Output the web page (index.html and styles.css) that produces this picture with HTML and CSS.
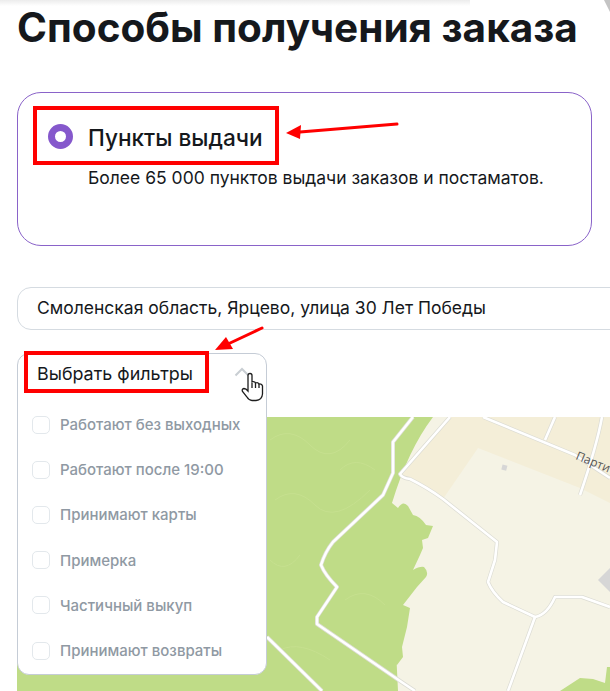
FILE: index.html
```html
<!DOCTYPE html>
<html lang="ru">
<head>
    <meta charset="UTF-8">
    <meta name="viewport" content="width=device-width, initial-scale=1.0">
    <title>Способы получения заказа</title>
    <link rel="stylesheet" href="styles.css">
</head>
<body>
    <div class="top-shade"></div>
    <div class="page">
        <h1 class="title">Способы получения заказа</h1>

        <div class="delivery-card">
            <div class="delivery-head">
                <span class="radio"></span>
                <span class="delivery-name">Пункты выдачи</span>
            </div>
            <p class="delivery-text">Более 65 000 пунктов выдачи заказов и постаматов.</p>
        </div>

        <div class="address">Смоленская область, Ярцево, улица 30 Лет Победы</div>

        <div class="map-area">
            <svg class="map" viewBox="17 417 593 274" preserveAspectRatio="none">
                <rect class="land" x="17" y="417" width="593" height="274"/>
                <polygon class="land-dark" points="450,417 610,417 610,503 580,488 478,448 443,499 402,475"/>
                <path class="forest" d="M17 417 H433 Q408 450 392 503 L398 508 Q403 500 408 506 L413 515 Q420 516 426 525 L433 526 L428 538 L422 540 L423 548 L420 555 L413 570 Q420 566 424 567 Q429 572 426 577 L417 587 L403 605 L410 608 L407 627 L402 647 L403 657 L397 665 L390 652 L396 650 L398 691 H17 Z"/>
                <path class="forest" d="M560 691 L580 678 L593 679 L605 683 L607 667 H610 V691 Z"/>
                <g class="forest-lines">
                    <path d="M270 440 Q290 425 310 445 T350 440"/>
                    <path d="M275 500 Q295 485 315 505 T370 490"/>
                    <path d="M270 560 Q285 575 300 555"/>
                    <path d="M345 600 Q365 585 385 605"/>
                    <path d="M280 650 Q300 640 330 660"/>
                    <path d="M340 470 Q355 455 375 470"/>
                </g>
                <polygon class="building" points="598,580 610,568 610,592"/>
                <rect class="building" x="502" y="465" width="5" height="5" transform="rotate(15 504 467)"/>
                <g class="road-casing">
                    <path d="M413 417 L393 442 V473 L383 495 L333 542 Q325 552 321 565 Q325 575 337 587 L317 617 V624 L403 683 L415 691"/>
                    <path d="M267 637 L322 691"/>
                    <path d="M450 417 L400 474 Q402 478 410 479 Q428 488 443 499 L497 542 L495 560 L488 582 Q492 592 503 602 L535 617 Q547 615 555 597 H582 L610 607"/>
                    <path d="M535 617 L508 691"/>
                    <path d="M483 417 L575 455 L610 478"/>
                    <path d="M555 417 L545 440"/>
                    <path d="M602 417 Q597 445 580 495"/>
                </g>
                <g class="road">
                    <path d="M413 417 L393 442 V473 L383 495 L333 542 Q325 552 321 565 Q325 575 337 587 L317 617 V624 L403 683 L415 691"/>
                    <path d="M267 637 L322 691"/>
                    <path d="M450 417 L400 474 Q402 478 410 479 Q428 488 443 499 L497 542 L495 560 L488 582 Q492 592 503 602 L535 617 Q547 615 555 597 H582 L610 607"/>
                    <path d="M535 617 L508 691"/>
                    <path d="M483 417 L575 455 L610 478"/>
                    <path d="M555 417 L545 440"/>
                    <path d="M602 417 Q597 445 580 495"/>
                </g>
                <text class="street" x="575" y="459" transform="rotate(22 575 459)">Парти</text>
            </svg>

            <div class="filters">
                <div class="filters-head">
                    <span>Выбрать фильтры</span>
                    <svg class="chevron" width="16" height="10" viewBox="0 0 16 10"><path d="M1.5 8.5 L8 2 L14.5 8.5"/></svg>
                </div>
                <ul class="filter-list">
                    <li class="filter-row"><span class="check"></span>Работают без выходных</li>
                    <li class="filter-row"><span class="check"></span>Работают после 19:00</li>
                    <li class="filter-row"><span class="check"></span>Принимают карты</li>
                    <li class="filter-row"><span class="check"></span>Примерка</li>
                    <li class="filter-row"><span class="check"></span>Частичный выкуп</li>
                    <li class="filter-row"><span class="check"></span>Принимают возвраты</li>
                </ul>
            </div>
        </div>
    </div>

    <!-- red marks drawn over the screenshot -->
    <svg class="marks" viewBox="0 0 610 691">
        <polygon class="corner" points="604,0 610,0 610,12"/>
        <rect x="35" y="108" width="242" height="55"/>
        <rect x="26" y="353" width="181" height="38"/>
        <path d="M397 124 L300 132"/>
        <polygon class="tip" points="286,133 301,125 300,139"/>
        <path d="M262 328 L228 344"/>
        <polygon class="tip" points="215,350 226,337 233,349"/>
    </svg>

    <svg class="hand" width="24" height="30" viewBox="0 0 24 30">
        <path d="M7 17 V3.5 Q7 1.5 9 1.5 Q11 1.5 11 3.5 V10 Q13.5 9 14.5 11 Q17 10 18 12 Q21 11.5 21.5 14 V22 Q21 28 15 28.5 H11 Q8 28.5 6 25 L1.5 19.5 Q0.5 17 3 16.5 Q5 16.5 7 19 Z"/>
        <path d="M11 11 V16 M14.5 11 V16 M18 12 V16"/>
    </svg>
</body>
</html>
```

FILE: styles.css
```css
* { margin: 0; padding: 0; box-sizing: border-box; }
html, body { height: 100%; overflow: hidden; }
body {
    position: relative;
    background-color: #fff;
    color: #15181c;
    font-family: 'Inter', 'Noto Sans', sans-serif;
}
.top-shade {
    position: absolute;
    top: 0;
    left: 0;
    width: 470px;
    height: 6px;
    background: linear-gradient(#ececec, #fff);
}
.page {
    display: flex;
    flex-direction: column;
    height: 691px;
    padding: 5px 0 0 17px;
}
.title {
    font-size: 40.5px;
    font-weight: 700;
    line-height: 46px;
    white-space: nowrap;
}
.delivery-card {
    flex: none;
    width: 575px;
    height: 154px;
    margin-top: 41px;
    padding: 27px 0 0 30px;
    border: 1px solid #8a63c9;
    border-radius: 24px;
}
.delivery-head {
    display: flex;
    align-items: center;
    gap: 15px;
}
.radio {
    width: 25px;
    height: 25px;
    border: 7.5px solid #8558cc;
    border-radius: 50%;
}
.delivery-name {
    padding-top: 3px;
    font-size: 22.6px;
    font-weight: 500;
    line-height: 30px;
}
.delivery-text {
    margin: 14px 0 0 40px;
    font-size: 17.5px;
    line-height: 22px;
    white-space: nowrap;
}
.address {
    flex: none;
    width: 640px;
    height: 43px;
    margin-top: 41px;
    padding-left: 19px;
    border: 1px solid #d5dbe1;
    border-radius: 14px;
    font-size: 17.5px;
    line-height: 40px;
    white-space: nowrap;
}
.map-area {
    position: relative;
    flex: 1;
    margin-top: 23px;
}
.map {
    position: absolute;
    top: 64px;
    left: 0;
    width: 593px;
    height: 274px;
}
.land { fill: #f5f3e5; }
.land-dark { fill: #f4eed8; }
.forest { fill: #bfdc87; }
.forest-lines path { fill: none; stroke: #c6e08f; stroke-width: 1; }
.building { fill: #d6d6d6; }
.road-casing path { fill: none; stroke: #dcdcd4; stroke-width: 4; stroke-linejoin: round; }
.road path { fill: none; stroke: #fff; stroke-width: 2.6; stroke-linejoin: round; }
.street { font-family: 'Open Sans', sans-serif; font-size: 12px; fill: #555; }
.filters {
    position: absolute;
    top: 0;
    left: 0;
    width: 250px;
    height: 322px;
    background-color: #fff;
    border: 1px solid #c5ccd6;
    border-radius: 12px;
}
.filters-head {
    display: flex;
    align-items: center;
    justify-content: space-between;
    height: 38px;
    margin-bottom: 10px;
    padding: 0 16px 0 19px;
    font-size: 17.9px;
    font-weight: 400;
    white-space: nowrap;
}
.chevron { margin-top: -2px; }
.chevron path { fill: none; stroke: #c9ced3; stroke-width: 2; }
.filter-list { list-style: none; }
.filter-row {
    display: flex;
    align-items: center;
    gap: 10px;
    height: 45.2px;
    padding-left: 14px;
    color: #8f99a3;
    font-size: 15px;
    font-weight: 500;
    white-space: nowrap;
}
.check {
    width: 18px;
    height: 18px;
    border: 1px solid #e3e8ec;
    border-radius: 5px;
}
.marks {
    position: absolute;
    top: 0;
    left: 0;
    width: 610px;
    height: 691px;
}
.marks rect { fill: none; stroke: #f00; stroke-width: 4; }
.marks path { fill: none; stroke: #f00; stroke-width: 3; stroke-linecap: round; }
.marks .tip { fill: #f00; }
.marks .corner { fill: #c4c4c4; }
.hand {
    position: absolute;
    top: 372px;
    left: 241px;
}
.hand path { fill: #fff; stroke: #1d1d1d; stroke-width: 1.3; }
```
